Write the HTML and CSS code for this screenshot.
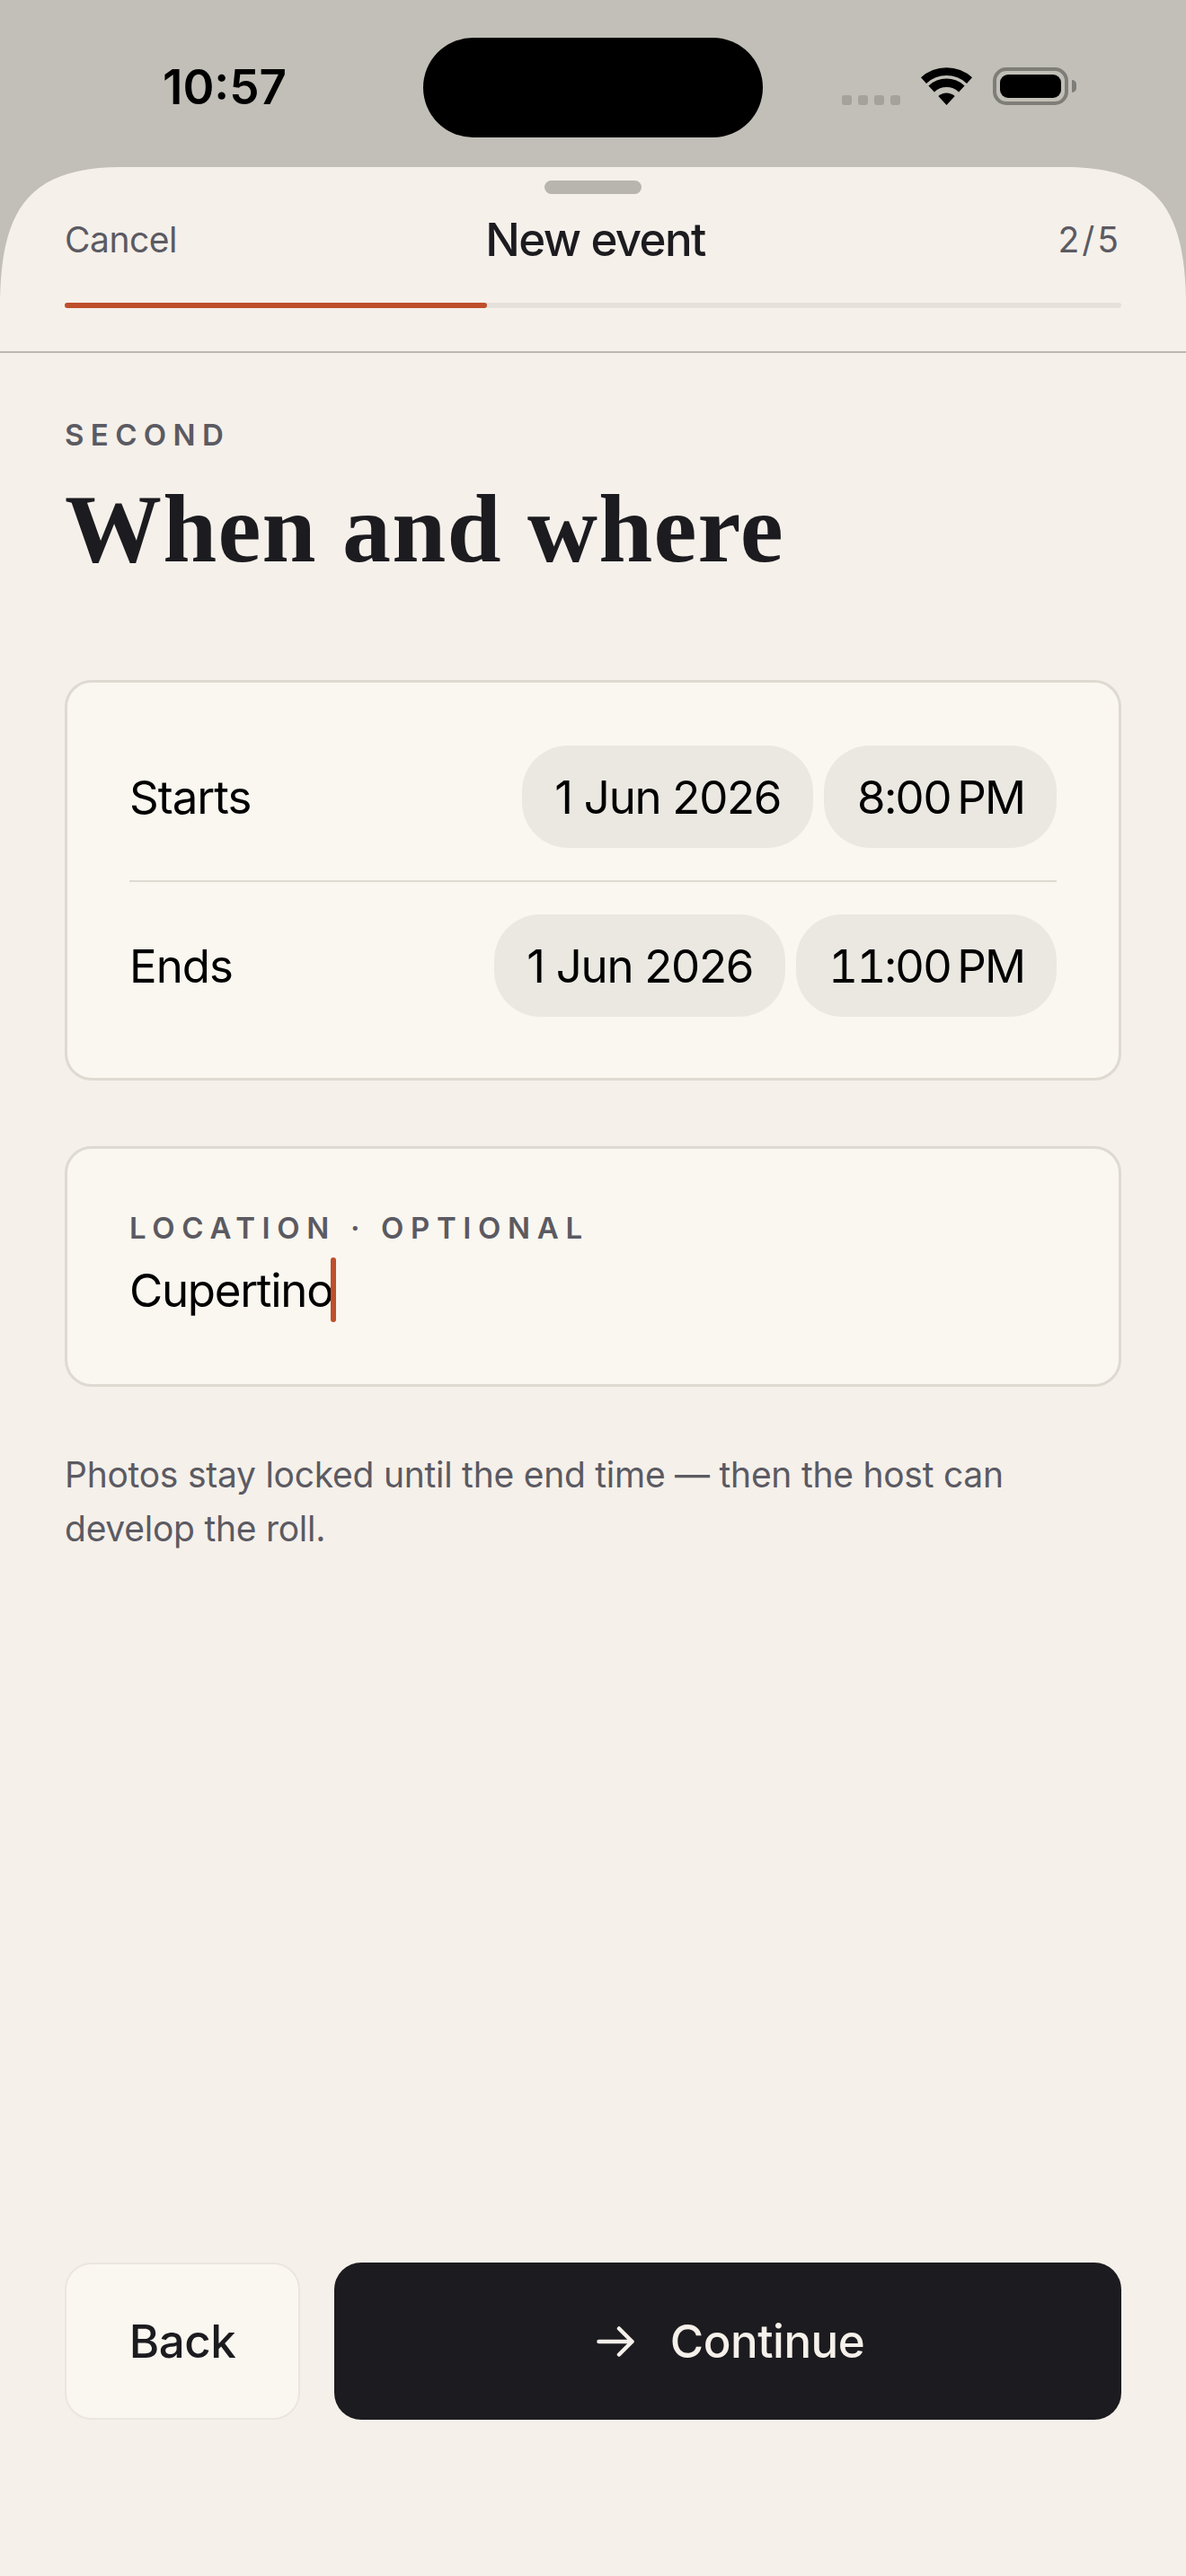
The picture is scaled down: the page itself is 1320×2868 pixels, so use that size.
FILE: index.html
```html
<!DOCTYPE html>
<html lang="en">
<head>
    <meta charset="UTF-8">
    <meta name="viewport" content="width=device-width, initial-scale=1.0">
    <title>New event</title>
    <link rel="stylesheet" href="styles.css">
</head>
<body>
    <div class="status">
        <div class="time">10:57</div>
        <div class="island"></div>
        <div class="icons">
            <div class="signal"><span></span><span></span><span></span><span></span></div>
            <svg class="wifi" width="57" height="42" viewBox="0 0 57 42">
                <path d="M0 11.3A42 42 0 0 1 57 11.3L51 17.9A33 33 0 0 0 6 17.9Z"/>
                <path d="M8.4 20.4A29.5 29.5 0 0 1 48.6 20.4L42.1 27.4A20 20 0 0 0 14.9 27.4Z"/>
                <path d="M19.3 32.1A13.5 13.5 0 0 1 37.7 32.1L28.5 42Z"/>
            </svg>
            <div class="battery"><div class="level"></div></div>
            <div class="battery-cap"></div>
        </div>
    </div>

    <div class="sheet">
        <div class="top">
            <div class="handle"></div>
            <div class="nav">
                <span class="cancel">Cancel</span>
                <span class="nav-title">New event</span>
                <span class="count">2/5</span>
            </div>
            <div class="progress"><div class="progress-fill"></div></div>
        </div>

        <div class="content">
            <div class="eyebrow">SECOND</div>
            <h1>When and where</h1>

            <div class="card times">
                <div class="row">
                    <span class="row-label">Starts</span>
                    <div class="pills">
                        <span class="pill date">1 Jun 2026</span>
                        <span class="pill clock">8:00&#8239;PM</span>
                    </div>
                </div>
                <div class="divider"></div>
                <div class="row">
                    <span class="row-label">Ends</span>
                    <div class="pills">
                        <span class="pill date">1 Jun 2026</span>
                        <span class="pill clock">11:00&#8239;PM</span>
                    </div>
                </div>
            </div>

            <div class="card location">
                <div class="field-label">LOCATION · OPTIONAL</div>
                <div class="field-value">Cupertino<span class="caret"></span></div>
            </div>

            <p class="note">Photos stay locked until the end time — then the host can develop the roll.</p>
        </div>

        <div class="actions">
            <button class="btn back">Back</button>
            <button class="btn next">
                <svg width="42" height="34" viewBox="0 0 42 34" fill="none" stroke="currentColor" stroke-width="4.5" stroke-linecap="round" stroke-linejoin="round">
                    <path d="M2.5 17H39.5M25 2.5L39.5 17 25 31.5"/>
                </svg>
                Continue
            </button>
        </div>
    </div>
</body>
</html>
```

FILE: styles.css
```css
*{
    padding: 0;
    margin: 0;
    box-sizing: border-box;
}
body{
    width: 1320px;
    height: 2868px;
    display: flex;
    flex-direction: column;
    background-color: #c1bfb7;
    font-family: Inter, "Liberation Sans", sans-serif;
    color: #000;
    overflow: hidden;
}

/* status bar */
.status{
    height: 186px;
    padding-top: 42px;
    display: grid;
    grid-template-columns: 1fr 378px 1fr;
    align-items: start;
}
.time{
    height: 111px;
    line-height: 111px;
    padding-left: 181px;
    font-size: 53px;
    font-weight: 600;
}
.island{
    height: 111px;
    background-color: #000;
    border-radius: 56px;
}
.icons{
    height: 111px;
    padding: 33px 122px 36px 0;
    display: flex;
    justify-content: flex-end;
    align-items: flex-end;
}
.signal{
    display: flex;
    gap: 7px;
    margin-right: 23px;
}
.signal span{
    width: 11px;
    height: 11px;
    border-radius: 3px;
    background-color: #a4a29b;
}
.wifi{
    display: block;
    margin-right: 23px;
}
.battery{
    width: 84px;
    height: 42px;
    padding: 4px;
    border: 4px solid #7f7d78;
    border-radius: 15px;
}
.level{
    width: 100%;
    height: 100%;
    background-color: #000;
    border-radius: 9px;
}
.battery-cap{
    width: 5px;
    height: 14px;
    margin: 0 0 14px 4px;
    background-color: #7f7d78;
    border-radius: 0 5px 5px 0;
}

/* sheet, the corner is a continuous curve so border-radius won't do */
.sheet{
    flex: 1;
    display: flex;
    flex-direction: column;
    background-color: #f5f0ea;
    clip-path: path("M0 147C2 50 30 0 135 0L1185 0C1290 0 1318 50 1320 147L1320 2682L0 2682Z");
}
.top{
    height: 207px;
    padding: 15px 72px 0;
    border-bottom: 2px solid #bdb7b0;
}
.handle{
    width: 108px;
    height: 15px;
    margin: 0 auto;
    background-color: #b8b5ae;
    border-radius: 8px;
}
.nav{
    height: 92px;
    margin-top: 4px;
    display: grid;
    grid-template-columns: 1fr auto 1fr;
    align-items: center;
}
.cancel{
    font-size: 39px;
    letter-spacing: -0.5px;
    color: #5b5a62;
}
.nav-title{
    margin-left: 5px;
    font-size: 51px;
    font-weight: 500;
    letter-spacing: -1.6px;
    color: #1c1b1f;
}
.count{
    font-size: 39px;
    color: #5b5a62;
    text-align: right;
    letter-spacing: 3px;
}
.progress{
    height: 6px;
    margin-top: 25px;
    background-color: #e6e1db;
    border-radius: 3px;
}
.progress-fill{
    width: 40%;
    height: 100%;
    background-color: #bf4f2b;
    border-radius: 3px;
}

.content{
    flex: 1;
    padding: 71px 72px 0;
}
.eyebrow{
    font-size: 33px;
    line-height: 40px;
    font-weight: 600;
    letter-spacing: 0.223em;
    color: #5b5a62;
}
h1{
    margin-top: 25px;
    font-family: "Liberation Serif", serif;
    font-size: 108px;
    line-height: 120px;
    font-weight: 700;
    letter-spacing: 1.2px;
    color: #1c1b1f;
}

.card{
    background-color: #faf7f0;
    border: 3px solid #dedad2;
    border-radius: 30px;
}
.times{
    margin-top: 108px;
    padding: 70px 69px 68px;
}
.row{
    display: flex;
    justify-content: space-between;
    align-items: center;
}
.row-label{
    font-size: 51px;
    letter-spacing: -1px;
}
.pills{
    display: flex;
    gap: 12px;
}
.pill{
    height: 114px;
    padding: 0 36px;
    display: flex;
    align-items: center;
    font-size: 51px;
    background-color: #ebe8e2;
    border-radius: 51px;
}
.date{
    letter-spacing: -1.3px;
}
.clock{
    font-variant-numeric: tabular-nums;
    letter-spacing: -2px;
}
.divider{
    height: 2px;
    margin: 36px 0;
    background-color: #dedad2;
}

.location{
    height: 268px;
    margin-top: 73px;
    padding: 68px 69px 0;
}
.field-label{
    font-size: 33px;
    line-height: 40px;
    font-weight: 600;
    letter-spacing: 0.231em;
    color: #5b5a62;
}
.field-value{
    height: 72px;
    margin-top: 13px;
    display: flex;
    align-items: center;
    font-size: 51px;
    letter-spacing: -1.3px;
}
.caret{
    width: 6px;
    height: 72px;
    margin-left: -2px;
    background-color: #bf4f2b;
    border-radius: 3px;
}
.note{
    margin-top: 68px;
    font-size: 39px;
    line-height: 60px;
    letter-spacing: -0.25px;
    color: #5b5a62;
}

.actions{
    padding: 0 72px 174px;
    display: flex;
    gap: 38px;
}
.btn{
    height: 175px;
    font-family: Inter, "Liberation Sans", sans-serif;
    font-size: 51px;
    font-weight: 500;
    letter-spacing: -0.5px;
    border-radius: 30px;
}
.back{
    width: 262px;
    background-color: #faf7f0;
    color: #1c1b1f;
    border: 2px solid #ebe6de;
}
.next{
    flex: 1;
    display: flex;
    justify-content: center;
    align-items: center;
    gap: 40px;
    padding-left: 6px;
    background-color: #1c1b1f;
    color: #f5f0ea;
    border: none;
}
```
